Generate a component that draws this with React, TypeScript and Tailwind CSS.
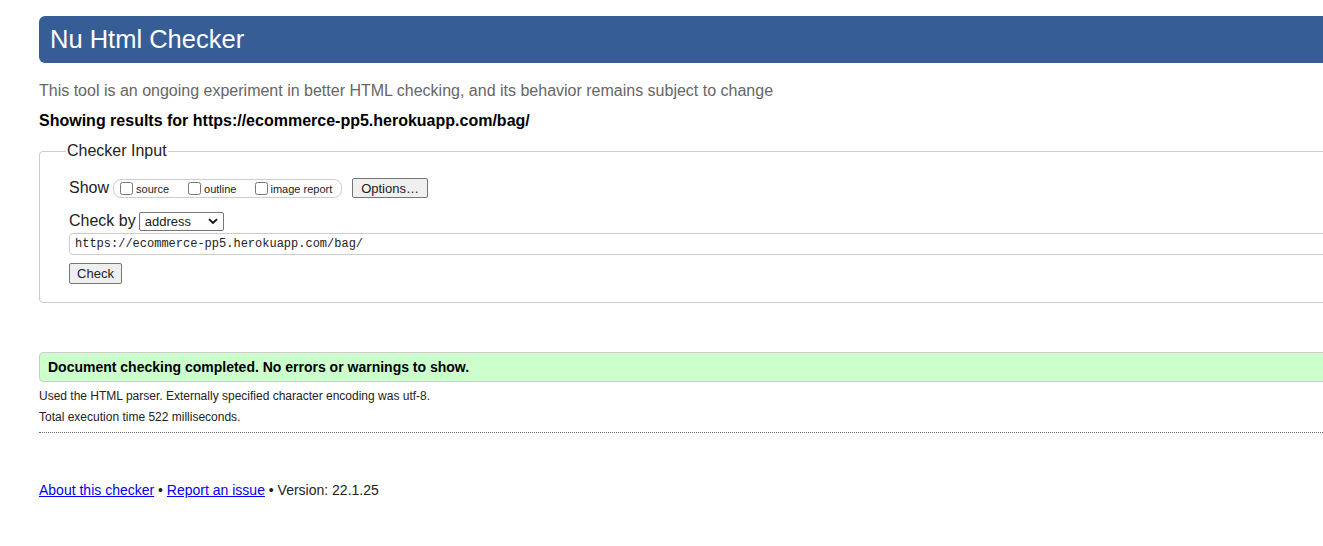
export default function App() {
  return (
    <div className="h-[546px] w-[1323px] overflow-hidden bg-white font-['Liberation_Sans',Arial,sans-serif] text-[#222]">
      <div className="ml-[39px] w-[1400px] pt-4">
        <h1 className="flex h-[47px] items-center rounded-md bg-[#365d95] pl-[11px] text-[25.5px] font-normal text-white">
          Nu Html Checker
        </h1>

        <p className="mt-[17px] text-base leading-[22px] text-[#666]">
          This tool is an ongoing experiment in better HTML checking, and its behavior remains subject to change
        </p>
        <p className="mt-[8px] text-base font-bold leading-[22px] text-black">
          Showing results for https://ecommerce-pp5.herokuapp.com/bag/
        </p>

        <fieldset className="mt-[9px] h-[162px] rounded border border-[#ccc] pl-[29px] pr-0">
          <legend className="ml-[-3px] px-[1px] text-base leading-[20px] text-[#222]">Checker Input</legend>

          <div className="mt-[15px] flex items-center">
            <span className="text-base">Show</span>
            <div className="ml-[4px] flex h-[19px] w-[229px] items-center rounded-lg border border-[#ccc] pl-[6px] text-[11px]">
              <label className="flex items-center">
                <input type="checkbox" className="m-0 h-[13px] w-[13px]" />
                <span className="ml-[3px] mt-[3px]">source</span>
              </label>
              <label className="ml-[19px] flex items-center">
                <input type="checkbox" className="m-0 h-[13px] w-[13px]" />
                <span className="ml-[3px] mt-[3px]">outline</span>
              </label>
              <label className="ml-[19px] flex items-center">
                <input type="checkbox" className="m-0 h-[13px] w-[13px]" />
                <span className="ml-[2px] mt-[3px]">image report</span>
              </label>
            </div>
            <button className="ml-[10px] h-[20px] w-[76px] rounded-[2px] border border-[#767676] bg-[#efefef] text-[13px] leading-none">
              Options…
            </button>
          </div>

          <div className="mt-[9px] flex items-center">
            <span className="text-base">Check by</span>
            <div className="relative ml-[3px] h-[19px] w-[85px] rounded-[2px] border border-[#767676] bg-white text-[13px]">
              <span className="absolute left-[5px] top-[1px] leading-[16px]">address</span>
              <svg className="absolute right-[5px] top-[5px]" width="10" height="7" viewBox="0 0 10 7">
                <path d="M1 1.2 L5 5 L9 1.2" fill="none" stroke="#111" strokeWidth="1.8" />
              </svg>
            </div>
          </div>

          <div className="mt-0 flex h-[22px] items-center rounded border border-[#ccc] pl-[5px] font-['Liberation_Mono',monospace] text-[12px]">
            https://ecommerce-pp5.herokuapp.com/bag/
          </div>

          <button className="mt-[8px] h-[21px] w-[53px] rounded-[2px] border border-[#767676] bg-[#efefef] text-[13px] leading-none">
            Check
          </button>
        </fieldset>

        <div className="mt-[49px] flex h-[30px] items-center rounded border border-[#ccc] bg-[#ccffcc] pl-[8px] text-sm font-bold text-black">
          Document checking completed. No errors or warnings to show.
        </div>

        <p className="mt-[7px] text-xs leading-[15px]">Used the HTML parser. Externally specified character encoding was utf-8.</p>
        <p className="mt-[6px] text-xs leading-[15px]">Total execution time 522 milliseconds.</p>
        <div className="mt-[7px] border-b border-dotted border-[#666]" />

        <p className="mt-[48px] text-sm leading-[18px]">
          <a href="#" className="text-[#0000ee] underline">About this checker</a> •{" "}
          <a href="#" className="text-[#0000ee] underline">Report an issue</a> • Version: 22.1.25
        </p>
      </div>
    </div>
  );
}
